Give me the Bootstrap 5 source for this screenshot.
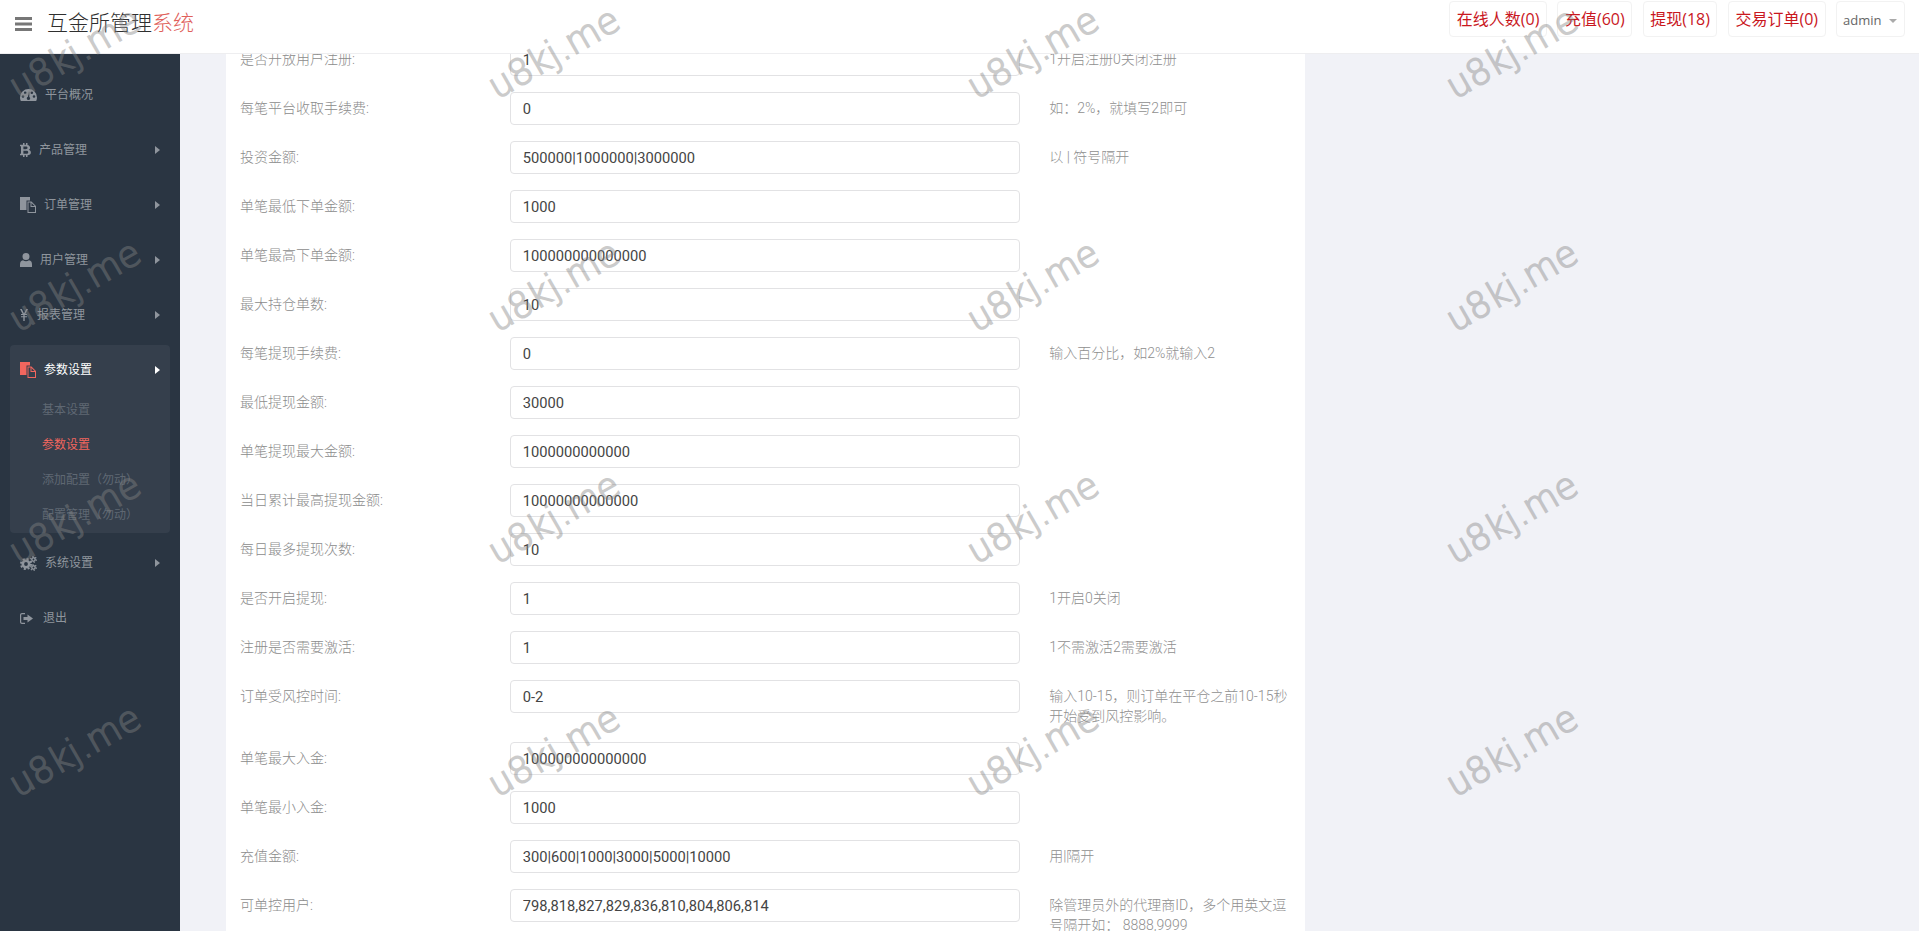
<!doctype html>
<html lang="zh-CN">
<head>
<meta charset="utf-8">
<title>互金所管理系统</title>
<link href="https://cdn.jsdelivr.net/npm/bootstrap@5.3.0/dist/css/bootstrap.min.css" rel="stylesheet">
<style>
html,body{height:100%}
body{overflow:hidden;background:#f1f2f7;color:#797979;font-family:"Roboto","Noto Sans CJK SC",sans-serif;font-size:14px;font-weight:300}
.shell{height:931px;position:relative}
.topbar{height:54px;background:#fff;border-bottom:1px solid #eeeef0;padding:0 14.5px 6px 15px}
.burger{width:17px;height:14px;display:block;color:#777}
.brand-name{font-size:21px;line-height:1;margin-left:15px;color:#2f2f2f;white-space:nowrap}
.brand-name span{color:#e0605a}
.top-actions{align-self:flex-start;margin-top:1px}
.top-btn{display:block;height:36px;line-height:34px;border:1px solid #f2f2f2;border-radius:4px;padding:0 6.5px;margin-left:10.5px;color:#c9171e;font-family:"Open Sans","Noto Sans CJK SC",sans-serif;font-size:16px;font-weight:400;text-decoration:none;white-space:nowrap}
.top-user{color:#666;font-size:13px;line-height:36px;padding:0 7px 0 6px}
.top-user i{display:inline-block;border:4px solid transparent;border-top-color:#aaa;border-bottom:0;margin-left:7px;vertical-align:2px}
.body-row{height:877px}
.sidebar{width:180px;flex:none;background:#2a3542;padding-top:16px}
.side-item{height:50px;margin:0 10px 5px;padding:0 10px;color:#8f959d;font-size:12px;text-decoration:none;font-weight:400}
.side-item svg.ico{flex:none;display:block;fill:currentColor}
.side-item .arrow{width:0;height:0;border:4px solid transparent;border-left:5px solid currentColor;border-right:0;margin-left:auto}
.side-group{background:#353f4c;margin:0 10px 5px;border-radius:4px;height:188px}
.side-group .side-item{margin:0;color:#fff}
.side-group .side-item svg.ico{fill:#f2665e}
.side-subs{margin-top:-2px}
.side-sub{display:block;height:35px;line-height:35px;padding-left:32px;font-size:12px;color:#5f6873;text-decoration:none;font-weight:400;white-space:nowrap}
.side-sub.on{color:#f2665e}
.gap-yen{margin-right:9px}
.gap-exit{margin-right:10px}
.content{flex:1;min-width:0;overflow:hidden}
.sheet{width:1079px;margin:-11px 0 0 46px;background:#fff;padding-bottom:40px}
.cfg-row{margin-bottom:16px}
.cfg-label{padding:6px 0 0 14px;line-height:21px;color:#8c8c8c;white-space:nowrap}
.cfg-field{padding:0 15px 0 14px}
.cfg-input{height:33px;border:1px solid #e2e2e4;border-radius:4px;padding:0 12px;font-size:14.7px;color:#444;font-weight:400;box-shadow:none}
.cfg-help{padding:6px 15px 0 14px;line-height:20px;color:#8f8f8f}
.wm-layer{position:absolute;inset:0;pointer-events:none;overflow:hidden;z-index:20;opacity:.42}
.wm{position:absolute;font-family:"DejaVu Sans",sans-serif;font-size:36px;line-height:1;color:#848484;-webkit-text-stroke:1.6px #848484;transform:rotate(-30deg);transform-origin:0 100%;white-space:nowrap}
</style>
</head>
<body>
<div class="shell d-flex flex-column">
  <header class="topbar d-flex align-items-center">
    <svg class="burger" viewBox="0 0 17 14" aria-hidden="true"><path fill="currentColor" d="M0 0h17v3H0zM0 5.500h17v3H0zM0 11h17v3H0z"/></svg>
    <div class="brand-name">互金所管理<span>系统</span></div>
    <div class="ms-auto d-flex top-actions">
      <a class="top-btn" href="#">在线人数(0)</a>
      <a class="top-btn" href="#">充值(60)</a>
      <a class="top-btn" href="#">提现(18)</a>
      <a class="top-btn" href="#">交易订单(0)</a>
      <a class="top-btn top-user" href="#">admin<i></i></a>
    </div>
  </header>
  <div class="body-row d-flex">
    <nav class="sidebar">
      <a class="side-item d-flex align-items-center" href="#"><svg class="ico me-2" width="17" height="14" viewBox="0 0 17 14"><path d="M8.500 1A8.500 8.500 0 0 0 0 9.500c0 1.300.3 2.500.8 3.500h15.400c.5-1 .8-2.200.8-3.500A8.500 8.500 0 0 0 8.500 1zM3 9.800a1.300 1.300 0 1 1 0-2.600 1.300 1.300 0 0 1 0 2.600zm2.200-3.700a1.300 1.300 0 1 1 0-2.600 1.300 1.300 0 0 1 0 2.600zm3.300 6a1.700 1.700 0 0 1-.6-3.300l1-5h.5l-.1 5.100a1.700 1.700 0 0 1-.8 3.200zm3.300-6a1.300 1.300 0 1 1 0-2.600 1.300 1.300 0 0 1 0 2.600zM14 9.800a1.300 1.300 0 1 1 0-2.600 1.300 1.300 0 0 1 0 2.600z"/></svg>平台概况</a>
      <a class="side-item d-flex align-items-center" href="#"><svg class="ico me-2" width="11" height="14" viewBox="0 0 11 14"><path fill-rule="evenodd" d="M3 0h1.500v1.800H6V0h1.500v1.900c1.500.3 2.600 1.200 2.600 2.800 0 1-.5 1.700-1.300 2.100 1.200.4 2.100 1.200 2.100 2.600 0 1.900-1.400 2.700-3.400 2.800V14H6v-1.700H4.500V14H3v-1.700H0v-1.500h1V3.300H0V1.800h3zM3.400 3.400v2.800h2.400c1 0 1.700-.4 1.700-1.400S6.800 3.400 5.800 3.400zm0 4.300v3.100h2.900c1.100 0 1.900-.4 1.900-1.600S7.400 7.700 6.300 7.700z"/></svg>产品管理<span class="arrow"></span></a>
      <a class="side-item d-flex align-items-center" href="#"><svg class="ico me-2" width="16" height="16" viewBox="0 0 16 16"><path fill-rule="evenodd" d="M0 0h10v3.500H6.500V13H0zM7.500 4.500h4L16 9v7H7.500zm1 1V15H15V10h-4.500V5.500zm3 .4V9h3.100z"/></svg>订单管理<span class="arrow"></span></a>
      <a class="side-item d-flex align-items-center" href="#"><svg class="ico me-2" width="12" height="14" viewBox="0 0 12 14"><path d="M6 0a3.500 3.500 0 1 1 0 7 3.500 3.500 0 0 1 0-7zM3 7.200c.8.600 1.900 1 3 1s2.200-.4 3-1c2 .2 3 1.800 3 4.300V14H0v-2.500c0-2.500 1-4.100 3-4.300z"/></svg>用户管理<span class="arrow"></span></a>
      <a class="side-item d-flex align-items-center" href="#"><svg class="ico gap-yen" width="8" height="12" viewBox="0 0 8 12"><path d="M0 0h1.800L4 4.500 6.200 0H8L5.400 5H7v1H4.700v1.200H7v1H4.700V12H3.300V8.200H1v-1h2.300V6H1V5h1.600z"/></svg>报表管理<span class="arrow"></span></a>
      <div class="side-group">
        <a class="side-item d-flex align-items-center" href="#"><svg class="ico me-2" width="16" height="16" viewBox="0 0 16 16"><path fill-rule="evenodd" d="M0 0h10v3.500H6.500V13H0zM7.500 4.500h4L16 9v7H7.500zm1 1V15H15V10h-4.500V5.500zm3 .4V9h3.100z"/></svg>参数设置<span class="arrow"></span></a>
        <div class="side-subs">
          <a class="side-sub" href="#">基本设置</a>
          <a class="side-sub on" href="#">参数设置</a>
          <a class="side-sub" href="#">添加配置（勿动）</a>
          <a class="side-sub" href="#">配置管理（勿动）</a>
        </div>
      </div>
      <a class="side-item d-flex align-items-center" href="#"><svg class="ico me-2" width="17" height="15" viewBox="0 0 17 15"><g fill="none" stroke="currentColor"><circle cx="6" cy="8" r="3.200" stroke-width="2.600"/><circle cx="6" cy="8" r="5" stroke-width="2" stroke-dasharray="2 1.930"/><circle cx="13.500" cy="3.500" r="1.700" stroke-width="1.500"/><circle cx="13.500" cy="3.500" r="2.900" stroke-width="1.200" stroke-dasharray="1.300 1.730"/><circle cx="13.500" cy="11.500" r="1.700" stroke-width="1.500"/><circle cx="13.500" cy="11.500" r="2.900" stroke-width="1.200" stroke-dasharray="1.300 1.730"/></g></svg>系统设置<span class="arrow"></span></a>
      <a class="side-item d-flex align-items-center" href="#"><svg class="ico gap-exit" width="13" height="11" viewBox="0 0 13 11"><path fill-rule="evenodd" d="M2 0h3v1.200H2.200c-.6 0-1 .4-1 1v6.600c0 .6.400 1 1 1H5V11H2c-1.100 0-2-.9-2-2V2C0 .9.900 0 2 0zm5.500 1.500L13 5.500l-5.500 4V7H3.500V4h4z"/></svg>退出</a>
    </nav>
    <main class="content">
      <form class="sheet">
        <div class="row g-0 cfg-row"><div class="col-3 cfg-label">是否开放用户注册:</div><div class="col-6 cfg-field"><input class="form-control cfg-input" value="1"></div><div class="col-3 cfg-help">1开启注册0关闭注册</div></div>
        <div class="row g-0 cfg-row"><div class="col-3 cfg-label">每笔平台收取手续费:</div><div class="col-6 cfg-field"><input class="form-control cfg-input" value="0"></div><div class="col-3 cfg-help">如：2%，就填写2即可</div></div>
        <div class="row g-0 cfg-row"><div class="col-3 cfg-label">投资金额:</div><div class="col-6 cfg-field"><input class="form-control cfg-input" value="500000|1000000|3000000"></div><div class="col-3 cfg-help">以 | 符号隔开</div></div>
        <div class="row g-0 cfg-row"><div class="col-3 cfg-label">单笔最低下单金额:</div><div class="col-6 cfg-field"><input class="form-control cfg-input" value="1000"></div><div class="col-3 cfg-help"></div></div>
        <div class="row g-0 cfg-row"><div class="col-3 cfg-label">单笔最高下单金额:</div><div class="col-6 cfg-field"><input class="form-control cfg-input" value="100000000000000"></div><div class="col-3 cfg-help"></div></div>
        <div class="row g-0 cfg-row"><div class="col-3 cfg-label">最大持仓单数:</div><div class="col-6 cfg-field"><input class="form-control cfg-input" value="10"></div><div class="col-3 cfg-help"></div></div>
        <div class="row g-0 cfg-row"><div class="col-3 cfg-label">每笔提现手续费:</div><div class="col-6 cfg-field"><input class="form-control cfg-input" value="0"></div><div class="col-3 cfg-help">输入百分比，如2%就输入2</div></div>
        <div class="row g-0 cfg-row"><div class="col-3 cfg-label">最低提现金额:</div><div class="col-6 cfg-field"><input class="form-control cfg-input" value="30000"></div><div class="col-3 cfg-help"></div></div>
        <div class="row g-0 cfg-row"><div class="col-3 cfg-label">单笔提现最大金额:</div><div class="col-6 cfg-field"><input class="form-control cfg-input" value="1000000000000"></div><div class="col-3 cfg-help"></div></div>
        <div class="row g-0 cfg-row"><div class="col-3 cfg-label">当日累计最高提现金额:</div><div class="col-6 cfg-field"><input class="form-control cfg-input" value="10000000000000"></div><div class="col-3 cfg-help"></div></div>
        <div class="row g-0 cfg-row"><div class="col-3 cfg-label">每日最多提现次数:</div><div class="col-6 cfg-field"><input class="form-control cfg-input" value="10"></div><div class="col-3 cfg-help"></div></div>
        <div class="row g-0 cfg-row"><div class="col-3 cfg-label">是否开启提现:</div><div class="col-6 cfg-field"><input class="form-control cfg-input" value="1"></div><div class="col-3 cfg-help">1开启0关闭</div></div>
        <div class="row g-0 cfg-row"><div class="col-3 cfg-label">注册是否需要激活:</div><div class="col-6 cfg-field"><input class="form-control cfg-input" value="1"></div><div class="col-3 cfg-help">1不需激活2需要激活</div></div>
        <div class="row g-0 cfg-row"><div class="col-3 cfg-label">订单受风控时间:</div><div class="col-6 cfg-field"><input class="form-control cfg-input" value="0-2"></div><div class="col-3 cfg-help">输入10-15，则订单在平仓之前10-15秒开始受到风控影响。</div></div>
        <div class="row g-0 cfg-row"><div class="col-3 cfg-label">单笔最大入金:</div><div class="col-6 cfg-field"><input class="form-control cfg-input" value="100000000000000"></div><div class="col-3 cfg-help"></div></div>
        <div class="row g-0 cfg-row"><div class="col-3 cfg-label">单笔最小入金:</div><div class="col-6 cfg-field"><input class="form-control cfg-input" value="1000"></div><div class="col-3 cfg-help"></div></div>
        <div class="row g-0 cfg-row"><div class="col-3 cfg-label">充值金额:</div><div class="col-6 cfg-field"><input class="form-control cfg-input" value="300|600|1000|3000|5000|10000"></div><div class="col-3 cfg-help">用|隔开</div></div>
        <div class="row g-0 cfg-row"><div class="col-3 cfg-label">可单控用户:</div><div class="col-6 cfg-field"><input class="form-control cfg-input" value="798,818,827,829,836,810,804,806,814"></div><div class="col-3 cfg-help">除管理员外的代理商ID，多个用英文逗号隔开如： 8888,9999</div></div>
      </form>
    </main>
  </div>
  <div class="wm-layer" aria-hidden="true" id="wm"></div>
</div>
<script>
var l=document.getElementById('wm'),h='';
for(var r=0;r<4;r++)for(var c=0;c<4;c++){h+='<div class="wm" style="left:'+(21+c*479)+'px;top:'+(105+r*232.5-36)+'px">u8kj.me</div>';}
l.innerHTML=h;
</script>
<script src="https://cdn.jsdelivr.net/npm/bootstrap@5.3.0/dist/js/bootstrap.bundle.min.js"></script>
</body>
</html>
